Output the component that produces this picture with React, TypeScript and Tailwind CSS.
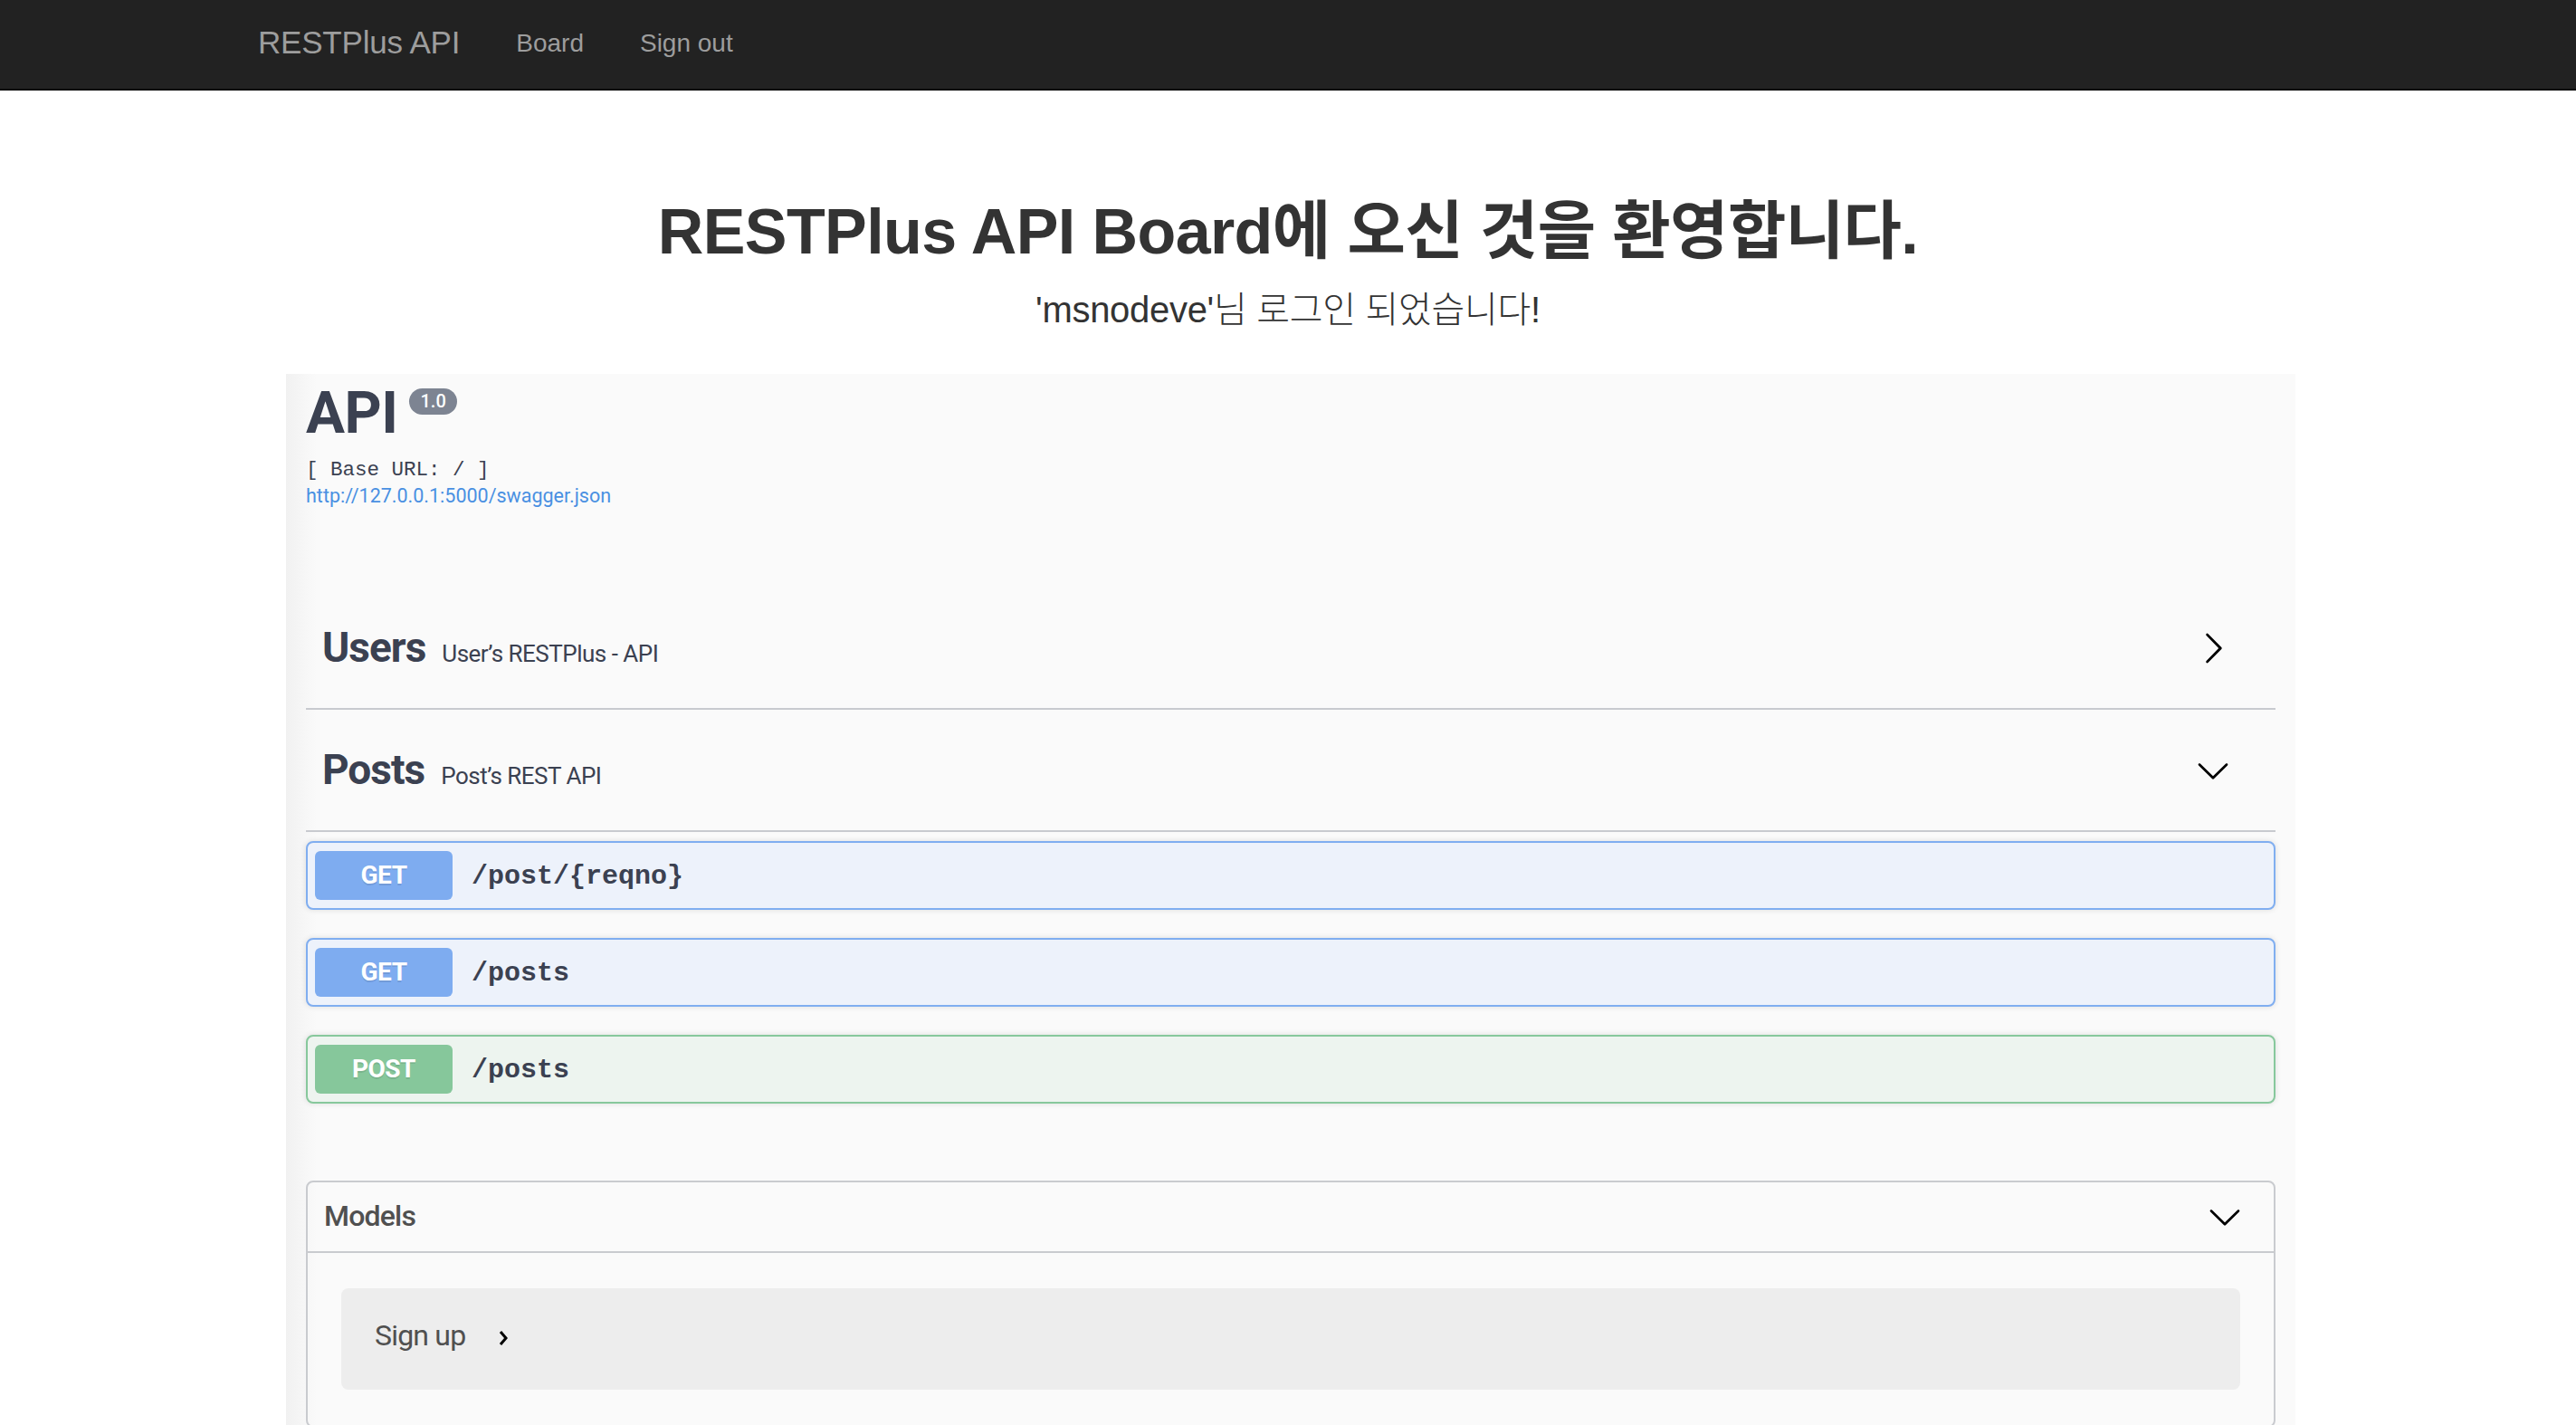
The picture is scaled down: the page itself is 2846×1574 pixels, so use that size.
import React from "react";

const ArrowRight = () => (
  <svg width="38" height="38" viewBox="0 0 20 20" aria-hidden="true">
    <path
      d="M13.25 10L6.109 2.58a.697.697 0 0 1 0-.979.68.68 0 0 1 .969 0l7.83 7.908a.697.697 0 0 1 0 .979l-7.83 7.908a.68.68 0 0 1-.969 0 .697.697 0 0 1 0-.979L13.25 10z"
      fill="#000"
    />
  </svg>
);

const ArrowDown = () => (
  <svg width="38" height="38" viewBox="0 0 20 20" aria-hidden="true">
    <path
      d="M17.418 6.109c.272-.268.709-.268.979 0s.271.701 0 .969l-7.908 7.83c-.27.268-.707.268-.979 0l-7.908-7.83c-.27-.268-.27-.701 0-.969.271-.268.709-.268.979 0L10 13.25l7.418-7.141z"
      fill="#000"
    />
  </svg>
);

type Op = { method: string; path: string; kind: "get" | "post" };

const ops: Op[] = [
  { method: "GET", path: "/post/{reqno}", kind: "get" },
  { method: "GET", path: "/posts", kind: "get" },
  { method: "POST", path: "/posts", kind: "post" },
];

function OpBlock({ op }: { op: Op }) {
  const isGet = op.kind === "get";
  return (
    <div
      className={
        isGet
          ? "flex items-center rounded-[8px] border-2 border-[#80aef0] bg-[#edf2fb] px-[8px] py-[9px] shadow-[0_0_6px_rgba(0,0,0,0.12)]"
          : "flex items-center rounded-[8px] border-2 border-[#87c89c] bg-[#edf4ef] px-[8px] py-[9px] shadow-[0_0_6px_rgba(0,0,0,0.12)]"
      }
    >
      <span
        className={
          isGet
            ? "flex h-[54px] w-[152px] items-center justify-center rounded-[6px] bg-[#7eacf0] text-[28px] font-bold tracking-[-0.5px] text-white [text-shadow:0_2px_0_rgba(0,0,0,0.1)]"
            : "flex h-[54px] w-[152px] items-center justify-center rounded-[6px] bg-[#86c79b] text-[28px] font-bold tracking-[-0.5px] text-white [text-shadow:0_2px_0_rgba(0,0,0,0.1)]"
        }
      >
        {op.method}
      </span>
      <span className="ml-[21px] mt-[2px] font-['Liberation_Mono',monospace] text-[30px] font-bold text-[#3b4151]">
        {op.path}
      </span>
    </div>
  );
}

function TagRow({ name, desc, open }: { name: string; desc: string; open: boolean }) {
  return (
    <div className="flex h-[135px] items-center justify-between border-b-2 border-[#c8cacf] pl-[18px] pr-[50px]">
      <div className="flex items-baseline">
        <span className="text-[46px] font-bold tracking-[-1px] text-[#3b4151]">{name}</span>
        <span className="ml-[18px] text-[26px] tracking-[-0.5px] text-[#3b4151]">{desc}</span>
      </div>
      {open ? <ArrowDown /> : <ArrowRight />}
    </div>
  );
}

export default function App() {
  return (
    <div className="min-h-screen bg-white font-['Liberation_Sans','Noto_Sans_CJK_KR',sans-serif]">
      <nav className="h-[100px] border-b-2 border-[#080808] bg-[#222222]">
        <div className="mx-auto flex h-full w-[2340px] items-center px-[32px] pb-[3px] text-[#9d9d9d]">
          <span className="text-[35px] tracking-[-0.2px]">RESTPlus API</span>
          <span className="ml-[62px] text-[28px]">Board</span>
          <span className="ml-[62px] text-[28px]">Sign out</span>
        </div>
      </nav>

      <h1 className="mt-[118px] text-center text-[70px] font-bold leading-[77px] tracking-[-0.6px] text-[#333333]">
        RESTPlus API Board에 오신 것을 환영합니다.
      </h1>
      <p className="mt-[24px] text-center text-[40px] font-light leading-[46px] tracking-[-0.3px] text-[#333333]">
        'msnodeve'님 로그인 되었습니다!
      </p>

      <div className="ml-[316px] mt-[48px] w-[2220px] bg-[linear-gradient(90deg,#f1f1f1_0px,#fafafa_34px)] px-[22px] pb-[60px] font-['Roboto','Noto_Sans_CJK_KR',sans-serif]">
        <div className="pt-[12px]">
          <div className="flex items-start">
            <span className="text-[64px] font-bold leading-[64px] tracking-[-0.5px] text-[#3b4151]">API</span>
            <span className="ml-[13px] mt-[4px] h-[29px] rounded-full bg-[#7d8492] px-[12px] text-[20px] font-medium leading-[29px] text-white">
              1.0
            </span>
          </div>
          <div className="mt-[17px] font-['Liberation_Mono',monospace] text-[22.5px] leading-[26px] text-[#3b4151]">
            [ Base URL: / ]
          </div>
          <div className="mt-[3px] text-[21.5px] leading-[26px] text-[#4990e2]">
            http://127.0.0.1:5000/swagger.json
          </div>
        </div>

        <div className="mt-[88px]">
          <TagRow name="Users" desc="User’s RESTPlus - API" open={false} />
          <TagRow name="Posts" desc="Post’s REST API" open={true} />
          <div className="mt-[10px] flex flex-col gap-[31px]">
            {ops.map((op, i) => (
              <OpBlock key={i} op={op} />
            ))}
          </div>
        </div>

        <div className="mt-[85px] rounded-[8px] border-2 border-[#c9cbcf]">
          <div className="flex h-[78px] items-center justify-between border-b-2 border-[#c9cbcf] pl-[18px] pr-[35px]">
            <span className="mb-[2px] text-[32px] font-medium tracking-[-0.8px] text-[#505050]">Models</span>
            <ArrowDown />
          </div>
          <div className="px-[37px] pb-[40px] pt-[39px]">
            <div className="flex h-[112px] items-center rounded-[8px] bg-[#ededed] pb-[8px] pl-[37px]">
              <span className="text-[32px] tracking-[-0.8px] text-[#505050]">Sign up</span>
              <svg className="ml-[36px] mt-[6px]" width="12" height="20" viewBox="0 0 12 20" aria-hidden="true">
                <polyline points="3,3 9,10 3,17" fill="none" stroke="#000" strokeWidth="3" />
              </svg>
            </div>
          </div>
        </div>
      </div>
    </div>
  );
}
